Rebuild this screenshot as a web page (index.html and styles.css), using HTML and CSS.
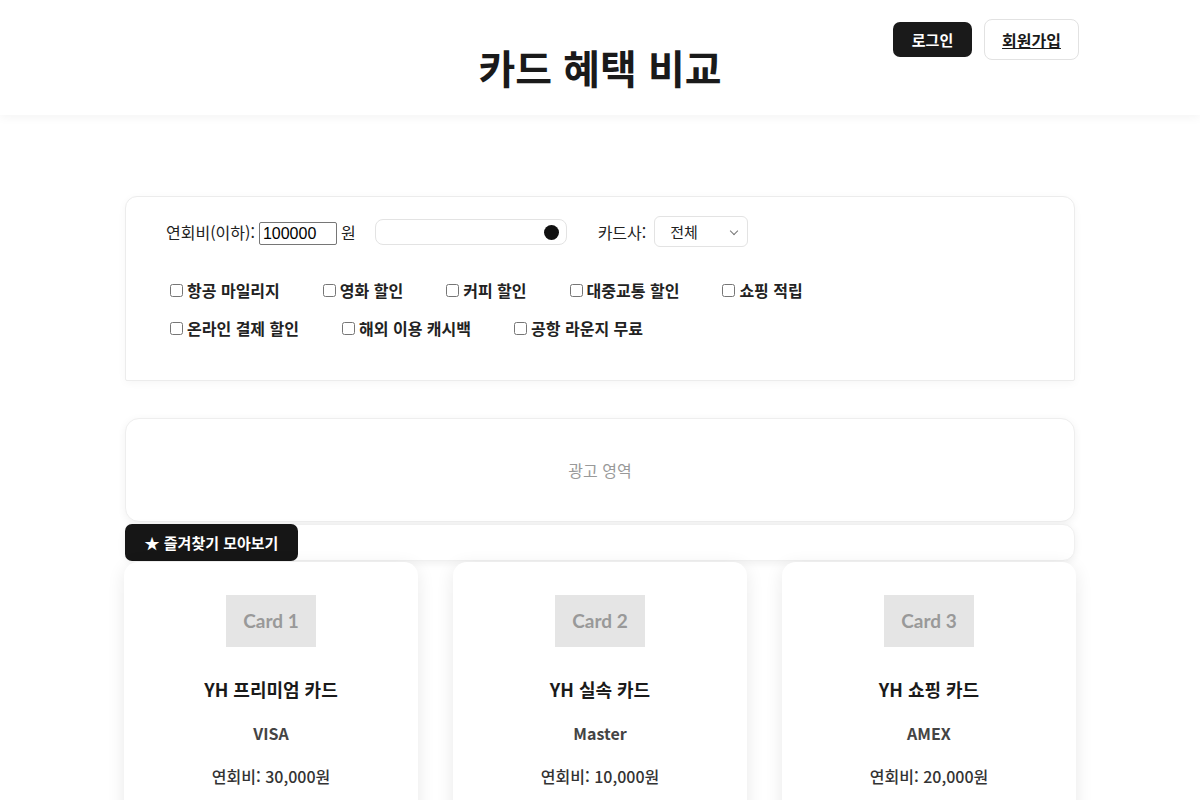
FILE: index.html
```html
<!DOCTYPE html>
<html lang="ko">
<head>
<meta charset="utf-8">
<title>카드 혜택 비교</title>
<link rel="stylesheet" href="styles.css">
</head>
<body>
<header class="site-header">
  <div class="header-side"></div>
  <h1 class="site-title">카드 혜택 비교</h1>
  <div class="header-side header-actions">
    <button class="btn-login">로그인</button>
    <button class="btn-signup">회원가입</button>
  </div>
</header>

<main class="container">
  <section class="filter-panel">
    <div class="filter-row">
      <label class="fee-group">연회비(이하): <input class="fee-input" type="text" value="100000"> 원</label>
      <input class="fee-range" type="range" min="0" max="100000" value="100000">
      <label class="company-group">카드사:
        <span class="select-wrap">
          <select class="company-select">
            <option>전체</option>
            <option>VISA</option>
            <option>Master</option>
            <option>AMEX</option>
          </select>
        </span>
      </label>
    </div>
    <div class="benefit-list">
      <label class="benefit"><input type="checkbox">항공 마일리지</label>
      <label class="benefit"><input type="checkbox">영화 할인</label>
      <label class="benefit"><input type="checkbox">커피 할인</label>
      <label class="benefit"><input type="checkbox">대중교통 할인</label>
      <label class="benefit row-end"><input type="checkbox">쇼핑 적립</label>
      <label class="benefit"><input type="checkbox">온라인 결제 할인</label>
      <label class="benefit"><input type="checkbox">해외 이용 캐시백</label>
      <label class="benefit"><input type="checkbox">공항 라운지 무료</label>
    </div>
  </section>

  <section class="ad-area">광고 영역</section>

  <div class="fav-bar">
    <button class="btn-fav">★ 즐겨찾기 모아보기</button>
  </div>

  <section class="card-grid">
    <article class="card">
      <div class="card-img">Card 1</div>
      <h2 class="card-name">YH 프리미엄 카드</h2>
      <p class="card-brand">VISA</p>
      <p class="card-fee">연회비: 30,000원</p>
    </article>
    <article class="card">
      <div class="card-img">Card 2</div>
      <h2 class="card-name">YH 실속 카드</h2>
      <p class="card-brand">Master</p>
      <p class="card-fee">연회비: 10,000원</p>
    </article>
    <article class="card">
      <div class="card-img">Card 3</div>
      <h2 class="card-name">YH 쇼핑 카드</h2>
      <p class="card-brand">AMEX</p>
      <p class="card-fee">연회비: 20,000원</p>
    </article>
  </section>
</main>
</body>
</html>
```

FILE: styles.css
```css
* { box-sizing: border-box; }

body {
  margin: 0;
  background: #fff;
  color: #222;
  font-family: "Noto Sans CJK KR", sans-serif;
}

.site-header {
  height: 115px;
  display: grid;
  grid-template-columns: 1fr auto 1fr;
  align-items: center;
  background: #fff;
  box-shadow: 0 2px 10px rgba(0, 0, 0, 0.05);
}

.site-title {
  margin: 0;
  padding-top: 18px;
  font-family: "Noto Sans CJK KR", sans-serif;
  font-size: 40px;
  font-weight: 700;
  color: #1a1a1a;
  letter-spacing: 0;
}

.header-actions {
  align-self: start;
  display: flex;
  justify-content: flex-end;
  align-items: center;
  gap: 12px;
  padding-top: 19px;
  padding-right: 121px;
}

.btn-login {
  height: 35px;
  width: 79px;
  border: none;
  border-radius: 7px;
  background: #1a1a1a;
  color: #fff;
  font-family: "Noto Sans CJK KR", sans-serif;
  font-size: 15px;
  font-weight: 700;
  cursor: pointer;
}

.btn-signup {
  height: 41px;
  width: 95px;
  border: 1.5px solid #e2e2e2;
  border-radius: 8px;
  background: #fff;
  color: #1a1a1a;
  font-family: "Noto Sans CJK KR", sans-serif;
  font-size: 16px;
  font-weight: 700;
  text-decoration: underline;
  cursor: pointer;
}

.container {
  width: 950px;
  margin: 81px auto 0;
}

.filter-panel {
  background: #fff;
  border: 1px solid #ececec;
  border-radius: 12px 12px 2px 2px;
  box-shadow: 0 2px 8px rgba(0, 0, 0, 0.04);
  padding: 19px 40px 28px;
  height: 185px;
}

.filter-row {
  display: flex;
  align-items: center;
  height: 31px;
  font-size: 16px;
  color: #222;
}

.fee-group {
  display: flex;
  align-items: center;
  gap: 4px;
}

.fee-input {
  width: 78px;
  height: 23px;
  margin-top: 4px;
  border: 1px solid #767676;
  border-radius: 2px;
  padding: 1px 3px;
  font-family: "Liberation Sans", Arial, sans-serif;
  font-size: 16px;
  color: #000;
}

.fee-range {
  -webkit-appearance: none;
  appearance: none;
  margin: 0 0 0 19px;
  width: 192px;
  height: 26px;
  padding: 0 7px;
  border: 1.5px solid #e3e3e3;
  border-radius: 8px;
  background: #fff;
}

.fee-range::-webkit-slider-runnable-track {
  height: 14px;
  background: transparent;
}

.fee-range::-webkit-slider-thumb {
  -webkit-appearance: none;
  appearance: none;
  width: 15px;
  height: 15px;
  border-radius: 50%;
  background: #111;
  box-shadow: 0 0 0 3px #fff;
  margin-top: 0;
}

.company-group {
  display: flex;
  align-items: center;
  gap: 8px;
  margin-left: 31px;
}

.select-wrap {
  position: relative;
  display: inline-block;
}

.select-wrap::after {
  content: "";
  position: absolute;
  right: 11px;
  top: 12px;
  width: 5px;
  height: 5px;
  border-right: 1.2px solid #777;
  border-bottom: 1.2px solid #777;
  transform: rotate(45deg);
  pointer-events: none;
}

.company-select {
  -webkit-appearance: none;
  appearance: none;
  display: block;
  width: 94px;
  height: 31px;
  border: 1.5px solid #e3e3e3;
  border-radius: 6px;
  background: #fff;
  padding: 0 15px;
  font-family: "Noto Sans CJK KR", sans-serif;
  font-size: 15px;
  color: #222;
}

.benefit-list {
  display: flex;
  flex-wrap: wrap;
  column-gap: 39px;
  margin-top: 31px;
  row-gap: 14px;
  font-size: 16px;
  font-weight: 700;
  color: #222;
}

.benefit {
  display: flex;
  align-items: center;
  height: 24px;
}

.benefit input {
  margin: 0 4px;
  width: 13px;
  height: 13px;
}

.row-end { margin-right: 200px; }

.ad-area {
  margin-top: 37px;
  height: 104px;
  display: flex;
  align-items: center;
  justify-content: center;
  background: #fff;
  border: 1px solid #eee;
  border-radius: 14px;
  box-shadow: 0 2px 8px rgba(0, 0, 0, 0.06);
  color: #999;
  font-size: 16px;
}

.fav-bar {
  margin-top: 2px;
  height: 37px;
  background: #fff;
  border-radius: 12px;
  box-shadow: 0 2px 8px rgba(0, 0, 0, 0.07);
  border: 1px solid #f0f0f0;
  display: flex;
  align-items: stretch;
}

.btn-fav {
  margin: -1px 0 -1px -1px;
  width: 173px;
  border: none;
  border-radius: 7px;
  background: #161616;
  color: #fff;
  font-family: "Noto Sans CJK KR", sans-serif;
  font-size: 15px;
  font-weight: 700;
  cursor: pointer;
}

.card-grid {
  display: grid;
  grid-template-columns: repeat(3, 294px);
  column-gap: 35px;
  margin: 1px -1px 0;
}

.card {
  background: #fff;
  border-radius: 14px;
  box-shadow: 0 4px 18px rgba(0, 0, 0, 0.09);
  padding-top: 33px;
  height: 320px;
  display: flex;
  flex-direction: column;
  align-items: center;
}

.card-img {
  width: 90px;
  height: 52px;
  padding-bottom: 2px;
  background: #e5e5e5;
  color: #999;
  display: flex;
  align-items: center;
  justify-content: center;
  font-family: Lato, sans-serif;
  font-size: 19px;
  font-weight: 700;
}

.card-name {
  margin: 29px 0 0;
  font-size: 18px;
  font-weight: 700;
  color: #1a1a1a;
  line-height: 26px;
}

.card-brand {
  margin: 19px 0 0;
  font-size: 16px;
  font-weight: 700;
  color: #444;
  line-height: 24px;
}

.card-fee {
  margin: 19px 0 0;
  font-size: 16px;
  font-weight: 500;
  color: #333;
  line-height: 24px;
}
```
